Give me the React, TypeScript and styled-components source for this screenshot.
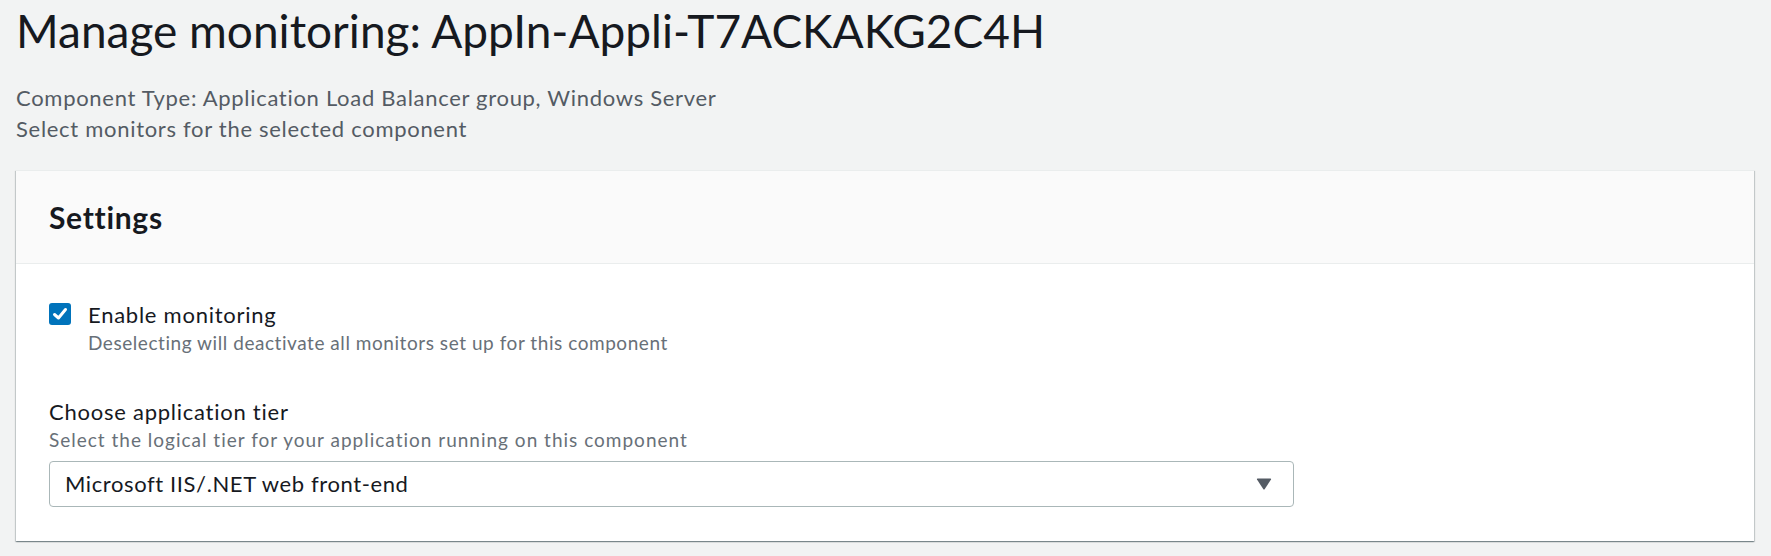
import React from 'react';
import styled, { createGlobalStyle } from 'styled-components';

const GlobalStyle = createGlobalStyle`
  html, body {
    margin: 0;
    padding: 0;
    background: #f2f3f3;
  }
  body {
    font-family: Lato, "Open Sans", sans-serif;
    color: #16191f;
  }
`;

const Page = styled.main`
  padding: 0 17px 16px 16px;
`;

const Title = styled.h1`
  margin: 3px 0 0;
  font-size: 46px;
  line-height: 56px;
  font-weight: 400;
  color: #16191f;
`;

const Subtitle = styled.div`
  margin-top: 23px;
  font-size: 22px;
  line-height: 31px;
  letter-spacing: 0.7px;
  color: #545b64;
`;

const Card = styled.section`
  margin-top: 26px;
  background: #fff;
  border-top: 1px solid #eaeded;
  box-shadow: 0 1px 1px 0 rgba(0, 28, 36, 0.3), 1px 1px 1px 0 rgba(0, 28, 36, 0.15),
    -1px 1px 1px 0 rgba(0, 28, 36, 0.15);
`;

const CardHeader = styled.header`
  background: #fafafa;
  border-bottom: 1px solid #eaeded;
  padding: 26px 33px;
`;

const CardTitle = styled.h2`
  margin: 0;
  font-size: 30px;
  line-height: 40px;
  font-weight: 700;
  letter-spacing: 0.7px;
`;

const CardBody = styled.div`
  padding: 35px 33px 34px;
`;

const CheckRow = styled.label`
  display: flex;
  align-items: flex-start;
  gap: 17px;
`;

const Box = styled.span`
  flex: none;
  width: 22px;
  height: 22px;
  margin-top: 4px;
  border-radius: 3px;
  background: #0073bb;
  display: flex;
  align-items: center;
  justify-content: center;
`;

const Label = styled.div`
  font-size: 22px;
  line-height: 32px;
  letter-spacing: 0.75px;
  color: #16191f;
`;

const Hint = styled.div<{ $spacing: number }>`
  font-size: 19px;
  line-height: 24px;
  letter-spacing: ${(p) => p.$spacing}px;
  color: #687078;
`;

const Field = styled.div`
  margin-top: 41px;
`;

const Select = styled.div`
  margin-top: 9px;
  width: 1245px;
  height: 46px;
  box-sizing: border-box;
  border: 1px solid #aab7b8;
  border-radius: 4px;
  background: #fff;
  display: flex;
  align-items: center;
  justify-content: space-between;
  padding: 0 21px 0 15px;
  font-size: 22px;
  line-height: 32px;
  letter-spacing: 0.6px;
  color: #16191f;
`;

const Check = () => (
  <svg width="16" height="14" viewBox="0 0 16 14">
    <polyline
      points="2.5,7.5 6.5,11 13.5,2.5"
      fill="none"
      stroke="#fff"
      strokeWidth="3"
      strokeLinecap="round"
      strokeLinejoin="round"
    />
  </svg>
);

const Caret = () => (
  <svg width="16" height="12" viewBox="0 0 16 12">
    <path d="M1 1.5 Q0.5 0.5 1.8 0.5 L14.2 0.5 Q15.5 0.5 15 1.5 L8.8 11 Q8 12 7.2 11 Z" fill="#545b64" />
  </svg>
);

const App: React.FC = () => {
  return (
    <Page>
      <GlobalStyle />
      <Title>Manage monitoring: AppIn-Appli-T7ACKAKG2C4H</Title>
      <Subtitle>
        Component Type: Application Load Balancer group, Windows Server
        <br />
        Select monitors for the selected component
      </Subtitle>
      <Card>
        <CardHeader>
          <CardTitle>Settings</CardTitle>
        </CardHeader>
        <CardBody>
          <CheckRow>
            <Box>
              <Check />
            </Box>
            <div>
              <Label>Enable monitoring</Label>
              <Hint $spacing={0.55}>Deselecting will deactivate all monitors set up for this component</Hint>
            </div>
          </CheckRow>
          <Field>
            <Label>Choose application tier</Label>
            <Hint $spacing={1}>Select the logical tier for your application running on this component</Hint>
            <Select>
              <span>Microsoft IIS/.NET web front-end</span>
              <Caret />
            </Select>
          </Field>
        </CardBody>
      </Card>
    </Page>
  );
};

export default App;
